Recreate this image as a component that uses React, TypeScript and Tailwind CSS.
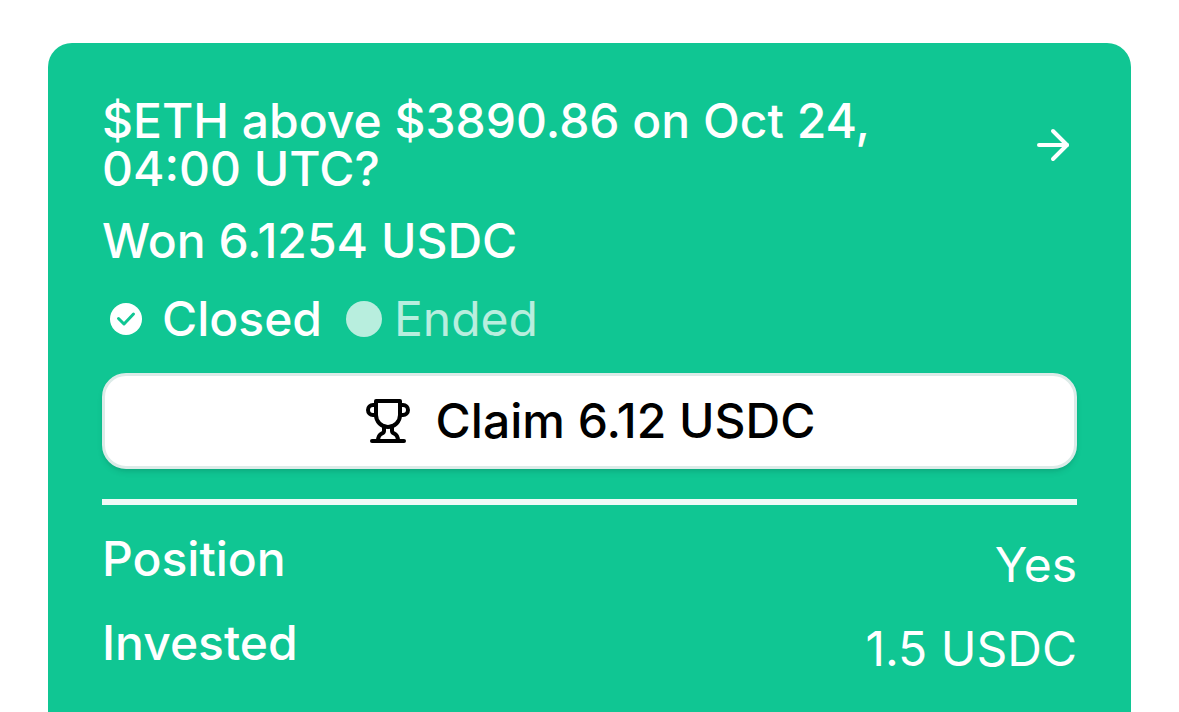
import { ArrowRight } from "lucide-react";

const details = [
  { label: "Position", value: "Yes" },
  { label: "Invested", value: "1.5 USDC" },
];

function ClosedIcon() {
  return (
    <svg viewBox="0 0 32 32" className="size-8" aria-hidden="true">
      <circle cx="16" cy="16" r="16" fill="#fff" />
      <path
        d="M8.5 15.5l5.5 5.5L23.5 11"
        fill="none"
        stroke="#10c693"
        strokeWidth="3"
        strokeLinecap="round"
        strokeLinejoin="round"
      />
    </svg>
  );
}

function TrophyIcon() {
  return (
    <svg
      viewBox="0 0 24 24"
      className="size-12"
      fill="none"
      stroke="currentColor"
      strokeWidth="2"
      strokeLinecap="round"
      strokeLinejoin="round"
      aria-hidden="true"
    >
      <path d="M6 9H4.5a2.5 2.5 0 0 1 0-5H6" />
      <path d="M18 9h1.5a2.5 2.5 0 0 0 0-5H18" />
      <path d="M4 22h16" />
      <path d="M10 14.66V17c0 .55-.47.98-.97 1.21C7.85 18.75 7 20.24 7 22" />
      <path d="M14 14.66V17c0 .55.47.98.97 1.21C16.15 18.75 17 20.24 17 22" />
      <path d="M18 2H6v7a6 6 0 0 0 12 0V2Z" />
    </svg>
  );
}

export default function App() {
  return (
    <main className="h-screen overflow-hidden bg-white px-12 pt-[43px] font-['Inter',sans-serif] text-5xl text-white">
      <article className="min-h-full rounded-t-3xl bg-[#10c693] px-[54px] pt-[54px]">
        <div className="flex items-center justify-between">
          <h1 className="max-w-[820px] leading-[48px] font-medium">
            $ETH above $3890.86 on Oct 24, 04:00 UTC?
          </h1>
          <a href="#market" aria-label="View market">
            <ArrowRight className="size-12" strokeWidth={2} />
          </a>
        </div>

        <p className="mt-6 leading-[48px] font-medium">Won 6.1254 USDC</p>

        <div className="mt-6 flex items-center leading-[60px]">
          <span className="flex items-center gap-5 pl-2 font-medium">
            <ClosedIcon />
            Closed
          </span>
          <span className="ml-6 flex items-center gap-3 opacity-70">
            <span className="size-9 rounded-full bg-white" />
            Ended
          </span>
        </div>

        <button
          type="button"
          className="mt-6 flex h-24 w-full items-center justify-center gap-6 rounded-3xl border-3 border-[#dcebe8] bg-white font-medium text-black shadow-md"
        >
          <TrophyIcon />
          Claim 6.12 USDC
        </button>

        <hr className="mt-[30px] border-t-6 border-[#effaf7]" />

        <dl className="mt-6 flex flex-col gap-3">
          {details.map(({ label, value }) => (
            <div key={label} className="flex items-end justify-between">
              <dt className="pb-3 leading-[60px] font-medium">{label}</dt>
              <dd className="leading-[72px] font-normal">{value}</dd>
            </div>
          ))}
        </dl>
      </article>
    </main>
  );
}
